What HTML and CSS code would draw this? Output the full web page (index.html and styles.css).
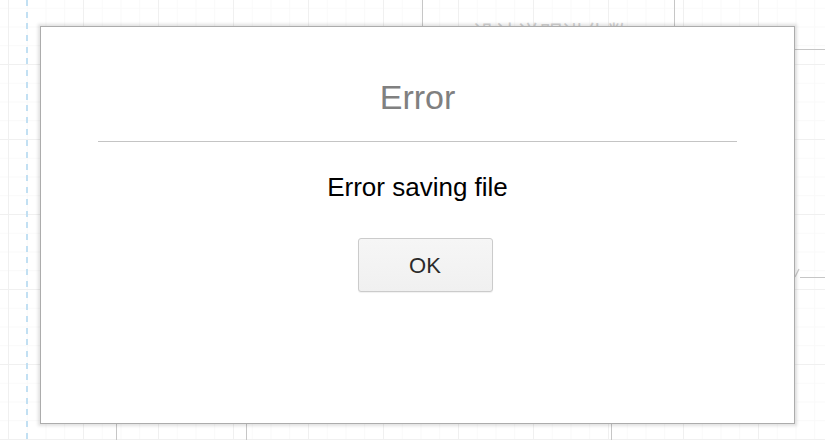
FILE: index.html
```html
<!DOCTYPE html>
<html lang="en">
<head>
<meta charset="utf-8">
<title>Error</title>
<link rel="stylesheet" href="styles.css">
</head>
<body>
<div class="canvas">
  <div class="page-break"></div>
  <div class="shape shape-top"><span class="shape-label">设计说明进化数</span></div>
  <div class="shape shape-bl"></div>
  <div class="vline vline-bm"></div>
  <div class="edge edge-r1"></div>
  <div class="edge edge-r2"></div>
  <svg class="slash" width="6" height="10" viewBox="0 0 6 10"><path d="M1 9 L5 1" stroke="#c8c8c8" stroke-width="1.2" fill="none"/></svg>

  <div class="dialog">
    <h1 class="dialog-title">Error</h1>
    <div class="dialog-rule"></div>
    <p class="dialog-message">Error saving file</p>
    <button class="btn" type="button">OK</button>
  </div>
</div>
</body>
</html>
```
FILE: styles.css
```css
html, body {
  margin: 0;
  padding: 0;
}
body {
  width: 825px;
  height: 440px;
  overflow: hidden;
  background: #ffffff;
  font-family: "Liberation Sans", Arial, Helvetica, sans-serif;
}
.canvas {
  position: relative;
  width: 825px;
  height: 440px;
  overflow: hidden;
  background-color: #ffffff;
  background-image:
    linear-gradient(to right, #f0f0f0 1px, transparent 1px),
    linear-gradient(to bottom, #f0f0f0 1px, transparent 1px),
    linear-gradient(to right, #f9f9f9 1px, transparent 1px),
    linear-gradient(to bottom, #f9f9f9 1px, transparent 1px);
  background-size: 75px 75px, 75px 75px, 18.75px 18.75px, 18.75px 18.75px;
  background-position: 8px -11px, 8px -11px, 8px 7.75px, 8px 7.75px;
}
.page-break {
  position: absolute;
  left: 26px;
  top: 0;
  width: 2px;
  height: 440px;
  background-image: repeating-linear-gradient(to bottom, #c2e0f3 0, #c2e0f3 6px, transparent 6px, transparent 11.7px);
}
.shape {
  position: absolute;
  box-sizing: border-box;
  border: 1.5px solid #c6c6c6;
  background: transparent;
}
.shape-top {
  left: 422px;
  top: -60px;
  width: 253px;
  height: 140px;
  display: flex;
  justify-content: center;
  padding-top: 79px;
}
.shape-label {
  font-family: "Noto Sans CJK SC", sans-serif;
  font-size: 22.5px;
  line-height: 24px;
  color: #d4d4d4;
  margin-left: 5px;
}
.shape-bl {
  left: 116px;
  top: 300px;
  width: 131px;
  height: 200px;
}
.vline {
  position: absolute;
  width: 0;
  border-left: 1.5px solid #c6c6c6;
}
.vline-bm {
  left: 611px;
  top: 300px;
  height: 200px;
}
.edge {
  position: absolute;
  height: 0;
  border-top: 1.5px solid #c6c6c6;
}
.edge-r1 {
  left: 780px;
  top: 48.5px;
  width: 60px;
}
.edge-r2 {
  left: 800px;
  top: 276.5px;
  width: 40px;
}
.slash {
  position: absolute;
  left: 794px;
  top: 268px;
}
.dialog {
  position: absolute;
  left: 40px;
  top: 26px;
  width: 755px;
  height: 398px;
  box-sizing: border-box;
  background: #ffffff;
  border: 1px solid #acacac;
  box-shadow: 0 0 3px 2px rgba(0, 0, 0, 0.12);
  display: flex;
  flex-direction: column;
  align-items: center;
  padding-top: 50px;
}
.dialog-title {
  margin: 0;
  font-weight: normal;
  font-size: 34px;
  line-height: 40px;
  color: #808080;
}
.dialog-rule {
  align-self: stretch;
  margin: 24px 57px 0 57px;
  height: 0;
  border-top: 1px solid #c4c4c4;
}
.dialog-message {
  margin: 30px 0 0 0;
  font-size: 26px;
  line-height: 30px;
  color: #000000;
}
.btn {
  margin: 36px 0 0 15px;
  width: 135px;
  height: 54px;
  box-sizing: border-box;
  border: 1px solid #cbcbcb;
  border-radius: 3px;
  background-color: #f5f5f5;
  background-image: linear-gradient(to bottom, #f6f6f6, #f0f0f0);
  box-shadow: 0 1px 1px rgba(0, 0, 0, 0.06);
  font-family: "Liberation Sans", Arial, Helvetica, sans-serif;
  font-size: 22px;
  line-height: 25px;
  color: #2b2b2b;
  padding: 0;
  display: flex;
  align-items: center;
  justify-content: center;
}
```
